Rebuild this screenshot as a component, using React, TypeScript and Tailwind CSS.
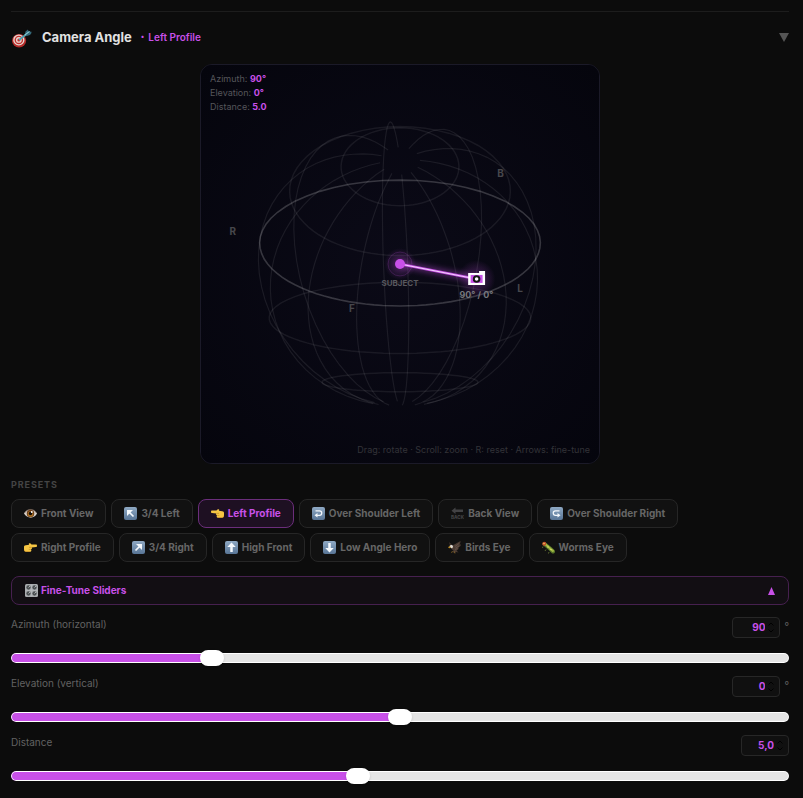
import { useState } from "react";
import type { ReactNode } from "react";

const CENTER = 200;
const RADIUS = 133;
const TILT = (25 * Math.PI) / 180;
const YAW = 25;
const DEPTH = 0.368;

const rad = (deg: number) => (deg * Math.PI) / 180;

function project(lon: number, lat: number, r = 1): [number, number] {
  const a = rad(lon + YAW);
  const b = rad(lat);
  const x = r * Math.cos(b) * Math.cos(a);
  const z = r * Math.cos(b) * Math.sin(a);
  const y = r * Math.sin(b);
  const sy = z * Math.sin(TILT) - y * Math.cos(TILT);
  const scale = RADIUS / (1 + DEPTH * (z * Math.cos(TILT) + y * Math.sin(TILT)));
  return [CENTER + x * scale, CENTER + sy * scale];
}

function line(points: [number, number][]) {
  return "M" + points.map(([x, y]) => `${x.toFixed(1)} ${y.toFixed(1)}`).join("L");
}

function ring(lat: number) {
  const pts: [number, number][] = [];
  for (let lon = 0; lon < 360; lon += 5) pts.push(project(lon, lat));
  return line(pts) + "Z";
}

function meridian(lon: number) {
  const pts: [number, number][] = [];
  for (let lat = -80; lat <= 80; lat += 5) pts.push(project(lon, lat));
  return line(pts);
}

const LATITUDES = [-60, -30, 30, 60];
const LONGITUDES = [0, 30, 60, 90, 120, 150, 180, 210, 240, 270, 300, 330];
const COMPASS = [
  { name: "L", lon: 0 },
  { name: "F", lon: 90 },
  { name: "R", lon: 180 },
  { name: "B", lon: 270 },
];

function Sphere() {
  const [cx, cy] = project(0, 0, 0.7);
  return (
    <svg viewBox="0 0 400 400" className="block w-full font-['Inter',sans-serif]" role="img" aria-label="Camera sphere">
      <defs>
        <radialGradient id="back" cx="50%" cy="50%" r="70%">
          <stop offset="0" stopColor="#0b0a17" />
          <stop offset="1" stopColor="#05050d" />
        </radialGradient>
        <radialGradient id="halo">
          <stop offset="0" stopColor="#c850e8" stopOpacity="0.35" />
          <stop offset="1" stopColor="#c850e8" stopOpacity="0" />
        </radialGradient>
        <filter id="glow" x="-30%" y="-100%" width="160%" height="300%">
          <feGaussianBlur stdDeviation="3" />
        </filter>
      </defs>
      <rect width="400" height="400" fill="url(#back)" />
      <g fill="none" stroke="#fff" strokeOpacity="0.08">
        {LATITUDES.map((lat) => (
          <path key={lat} d={ring(lat)} strokeWidth="1.5" strokeOpacity="0.07" />
        ))}
        {LONGITUDES.map((lon) => (
          <path key={lon} d={meridian(lon)} strokeWidth="1.2" />
        ))}
      </g>
      <path d={ring(0)} fill="none" stroke="#fff" strokeOpacity="0.19" strokeWidth="1.6" />
      <g fill="#47474c" fontSize="10" fontWeight="700" textAnchor="middle">
        {COMPASS.map(({ name, lon }) => {
          const [x, y] = project(lon, 0, 1.165);
          return (
            <text key={name} x={x} y={y + 4}>
              {name}
            </text>
          );
        })}
      </g>
      <circle cx="200" cy="200" r="16" fill="url(#halo)" />
      <circle cx="200" cy="200" r="12" fill="none" stroke="#c850e8" strokeOpacity="0.2" />
      <path d={`M200 200L${cx} ${cy}`} stroke="#c850e8" strokeWidth="4" strokeOpacity="0.6" filter="url(#glow)" />
      <circle cx={cx} cy={cy} r="19" fill="url(#halo)" />
      <path d={`M200 200L${cx} ${cy}`} stroke="#c850e8" strokeWidth="2.5" />
      <path d={`M200 200L${cx} ${cy}`} stroke="#f3d5fb" strokeWidth="1" />
      <circle cx="200" cy="200" r="5" fill="#c850e8" />
      <g transform={`translate(${Math.round(cx)} ${Math.round(cy)})`}>
        <path d="M-8.500-6h11v-2h6v14h-17z" fill="#fff" />
        <rect x="-6" y="-4" width="12" height="8" fill="#c850e8" />
        <circle r="3.800" fill="#151515" />
        <circle r="1.800" fill="#fff" />
      </g>
      <text x="200" y="222" fill="#58585e" fontSize="8" fontWeight="700" textAnchor="middle">
        SUBJECT
      </text>
      <text x={cx} y={cy + 19} fill="#77777c" fontSize="9" fontWeight="700" textAnchor="middle">
        90° / 0°
      </text>
    </svg>
  );
}

function Glyph({ children, size = "size-[13px]" }: { children: ReactNode; size?: string }) {
  return (
    <svg viewBox="0 0 26 26" className={`${size} shrink-0`} aria-hidden="true">
      {children}
    </svg>
  );
}

function Tile({ children }: { children: ReactNode }) {
  return (
    <Glyph>
      <defs>
        <linearGradient id="tile" x1="0" y1="0" x2="0" y2="1">
          <stop offset="0" stopColor="#8fa9c4" />
          <stop offset="1" stopColor="#587596" />
        </linearGradient>
      </defs>
      <rect width="26" height="26" rx="4" fill="url(#tile)" />
      <g fill="none" stroke="#f4f8fc" strokeWidth="3.500">
        {children}
      </g>
    </Glyph>
  );
}

function Hand({ flip = false }: { flip?: boolean }) {
  return (
    <Glyph>
      <g transform={flip ? "translate(26 0) scale(-1 1)" : undefined}>
        <path
          d="M0 9.500C0 8 .8 7 2 7h9l2-2c1-1.200 3.500-.7 3.500 1l-.8 1.700 6.800 1C25 9.300 26 10 26 12v5c0 2.800-1.500 4.500-4 4.500h-7c-2.500 0-3.700-1-3.700-3 0-.8.200-1.300.8-1.800-1.300-.4-2-1.300-2-2.300 0-.6.200-1.100.6-1.500L2 12c-1.200 0-2-1-2-2.500z"
          fill="#f5c644"
        />
        <path d="M11 12.700h5M12.500 16.800h4" stroke="#b97f1d" strokeWidth="1.200" fill="none" />
        <path d="M14 21h8c2 0 3.300-1.500 3.300-3.500" stroke="#d99a2b" strokeWidth="1.300" fill="none" />
      </g>
    </Glyph>
  );
}

const eye = (
  <Glyph>
    <path d="M0 13C5 3 20 2 26 13 21 24 6 24 0 13z" fill="#d9d2cb" />
    <path d="M1 12C6 3 20 2 25 12" fill="none" stroke="#6d5b50" strokeWidth="1.500" />
    <circle cx="13" cy="13" r="7.500" fill="#6b3f1c" />
    <circle cx="13" cy="14" r="5.500" fill="#a86f22" />
    <circle cx="13" cy="13" r="3.500" fill="#120b06" />
    <circle cx="15.500" cy="10" r="1.800" fill="#fff" />
  </Glyph>
);

const back = (
  <Glyph>
    <path d="M1 7.500L9 1v4h15v5H9v4z" fill="#424244" />
    <text x="13" y="24" fill="#424244" fontSize="9" fontWeight="800" textAnchor="middle">
      BACK
    </text>
  </Glyph>
);

const eagle = (
  <Glyph>
    <path d="M8 9C13 8 17 4 25 0c0 4-1 6-2 7l3 0c-1 4-3 5-5 6 1 2-1 5-4 6l4 4-5-1-3 2-4-2 2-3C6 17 5 13 8 9z" fill="#4b3b33" />
    <path d="M7 11C3 8 2 5 2 2l8 7z" fill="#372c27" />
    <path d="M3 10c2-3 7-2 7 1l-1 3c-2 1-4 0-5-2z" fill="#ded9d2" />
    <path d="M4 11l-3 1 1 2 3-1zM9 20l-2 4M13 21l1 4" fill="#d9a52d" stroke="#bd8c28" />
    <path d="M14 11l8-6M15 14l7-4M14 17l5-2" stroke="#75645a" />
  </Glyph>
);

const worm = (
  <Glyph>
    <path d="M5 6l6 5 6 5 5 5" fill="none" stroke="#58762a" strokeWidth="8" strokeLinecap="round" />
    <path d="M6 6l6 5 5 5 5 4" fill="none" stroke="#a3ba43" strokeWidth="4.500" strokeLinecap="round" strokeDasharray="3 3" />
    <circle cx="4.500" cy="5.500" r="4" fill="#c5502b" />
    <circle cx="4" cy="5" r="1.500" fill="#f3d267" />
    <path d="M2 11l-1 3M8 17l-2 3M14 22l-1 3" stroke="#728339" strokeWidth="1.500" />
    <circle cx="12" cy="12" r="1.500" fill="#e2de72" />
    <circle cx="18" cy="17" r="1.500" fill="#e2de72" />
  </Glyph>
);

const knobs = (
  <Glyph>
    <rect width="26" height="26" rx="3" fill="#a9acaf" />
    {[
      [7, 7],
      [19, 7],
      [7, 19],
      [19, 19],
    ].map(([x, y]) => (
      <g key={`${x}-${y}`}>
        <circle cx={x} cy={y} r="4.300" fill="#4c5053" />
        <path d={`M${x} ${y}l3-3`} stroke="#d9dbdc" strokeWidth="1.400" />
      </g>
    ))}
    <path d="M1 13h24M13 1v24" stroke="#b9bcbe" strokeWidth="1.200" />
  </Glyph>
);

const dart = (
  <Glyph size="size-[21px]">
    <ellipse cx="10" cy="17" rx="8.800" ry="8.300" fill="#b32b29" />
    <ellipse cx="9.700" cy="16" rx="7" ry="6.800" fill="#e6d8d2" />
    <circle cx="9.700" cy="16" r="5.300" fill="#c6302d" />
    <circle cx="9.700" cy="16" r="3.600" fill="#e6d8d2" />
    <circle cx="9.700" cy="16" r="1.900" fill="#c6302d" />
    <path d="M10 16l9-7" stroke="#4f9fae" strokeWidth="2.400" />
    <path d="M17 9.500l1-4 3-2.500.8 2.500 3.700.5-.5 2-1.500 2-4 1z" fill="#35697a" />
    <path d="M17 10l6-4.500" stroke="#8ed4dc" strokeWidth="1.300" />
  </Glyph>
);

const PRESETS: { label: string; icon: ReactNode }[] = [
  { label: "Front View", icon: eye },
  { label: "3/4 Left", icon: <Tile><path d="M19 19L10 10" /><path d="M6 6h12L6 18z" fill="#f4f8fc" stroke="none" /></Tile> },
  { label: "Left Profile", icon: <Hand /> },
  { label: "Over Shoulder Left", icon: <Tile><path d="M7 7.500h8a4.500 4.500 0 010 9h-5" strokeWidth="2.500" /><path d="M11 12v9l-6-4.500z" fill="#f4f8fc" stroke="none" /></Tile> },
  { label: "Back View", icon: back },
  { label: "Over Shoulder Right", icon: <Tile><path d="M19 7.500h-8a4.500 4.500 0 000 9h5" strokeWidth="2.500" /><path d="M15 12v9l6-4.500z" fill="#f4f8fc" stroke="none" /></Tile> },
  { label: "Right Profile", icon: <Hand flip /> },
  { label: "3/4 Right", icon: <Tile><path d="M7 19L16 10" /><path d="M20 6H8l12 12z" fill="#f4f8fc" stroke="none" /></Tile> },
  { label: "High Front", icon: <Tile><path d="M13 22V10" strokeWidth="5" /><path d="M13 3l8.500 9h-17z" fill="#f4f8fc" stroke="none" /></Tile> },
  { label: "Low Angle Hero", icon: <Tile><path d="M13 4v12" strokeWidth="5" /><path d="M13 23l8.500-9h-17z" fill="#f4f8fc" stroke="none" /></Tile> },
  { label: "Birds Eye", icon: eagle },
  { label: "Worms Eye", icon: worm },
];

interface ControlProps {
  id: string;
  label: string;
  min: number;
  max: number;
  step: number;
  start: number;
  text: (v: number) => string;
  unit?: string;
}

function Control({ id, label, min, max, step, start, text, unit }: ControlProps) {
  const [value, setValue] = useState(start);
  const part = (value - min) / (max - min);
  return (
    <div className="flex flex-col gap-[11px]">
      <div className="flex items-start justify-between">
        <label htmlFor={id} className="text-[10px] leading-[15px] text-[#626262]">
          {label}
        </label>
        <div className="flex gap-1">
          <div className="grid w-12 items-center">
            <input
              type="text"
              inputMode="decimal"
              readOnly
              aria-label={`${label} value`}
              value={text(value)}
              className="col-start-1 row-start-1 h-[21px] w-full rounded-sm border border-[#272727] bg-[#101010] pr-[14px] pb-px text-right text-[10px] font-bold text-[#c850e8] outline-none"
            />
            <svg viewBox="0 0 6 11" className="col-start-1 row-start-1 mr-[6px] h-[11px] w-[6px] justify-self-end" fill="none" stroke="#000" aria-hidden="true">
              <path d="M.5 3.500L3 1l2.500 2.500M.5 7.500L3 10l2.500-2.500" />
            </svg>
          </div>
          {unit && <span className="text-[10px] leading-[19px] text-[#626262]">{unit}</span>}
        </div>
      </div>
      <input
        id={id}
        type="range"
        min={min}
        max={max}
        step={step}
        value={value}
        onChange={(e) => setValue(Number(e.target.value))}
        style={{
          backgroundImage: `linear-gradient(to right, #c850e8 calc(12px + (100% - 24px) * ${part}), #e5e5e5 0)`,
        }}
        className="my-1 block h-[10px] w-full appearance-none rounded-full bg-[#e5e5e5] ring-1 ring-white ring-inset [&::-webkit-slider-thumb]:h-4 [&::-webkit-slider-thumb]:w-6 [&::-webkit-slider-thumb]:appearance-none [&::-webkit-slider-thumb]:rounded-full [&::-webkit-slider-thumb]:bg-white [&::-webkit-slider-thumb]:shadow"
      />
    </div>
  );
}

export default function App() {
  const [active, setActive] = useState("Left Profile");
  return (
    <main className="min-h-screen bg-[#0c0c0c] pt-[11px] pr-[14px] pb-[14px] pl-[11px] font-['Inter',sans-serif]">
      <section className="border-t border-[#1d1d1d]">
        <header className="flex h-[52px] items-center pb-[2px]">
          {dart}
          <h2 className="ml-[10px] text-[13px] leading-5 font-bold text-[#e2e2e2]">Camera Angle</h2>
          <span className="ml-[9px] flex items-center gap-1 text-[10px] leading-5 font-semibold text-[#c850e8]">
            <span className="text-[7px]">•</span>
            Left Profile
          </span>
          <button type="button" aria-label="Collapse" className="ml-auto text-[#555]">
            <svg viewBox="0 0 10 9" className="h-[9px] w-[10px]" fill="currentColor" aria-hidden="true">
              <path d="M0 0h10L5 9z" />
            </svg>
          </button>
        </header>

        <div className="mx-auto grid w-full max-w-[400px] overflow-hidden rounded-xl border border-[#1b1a28] bg-[#07070f]">
          <div className="col-start-1 row-start-1">
            <Sphere />
          </div>
          <div className="z-10 col-start-1 row-start-1 self-start px-[9px] py-[7px] text-[9px] leading-[14px] text-[#55555a]">
            <p>Azimuth: <b className="font-bold text-[#c850e8]">90°</b></p>
            <p>Elevation: <b className="font-bold text-[#c850e8]">0°</b></p>
            <p>Distance: <b className="font-bold text-[#c850e8]">5.0</b></p>
          </div>
          <p className="z-10 col-start-1 row-start-1 self-end justify-self-end px-[9px] py-[6px] text-[9px] leading-[14px] text-[#333338]">
            Drag: rotate · Scroll: zoom · R: reset · Arrows: fine-tune
          </p>
        </div>

        <h3 className="mt-[14px] text-[9px] leading-[14px] font-bold tracking-widest text-[#444]">PRESETS</h3>
        <div className="mt-[7px] flex flex-wrap gap-[5px] pr-2">
          {PRESETS.map(({ label, icon }) => (
            <button
              key={label}
              type="button"
              onClick={() => setActive(label)}
              className={`flex h-[29px] items-center gap-1 rounded-lg border px-3 text-[10px] font-bold ${
                active === label ? "border-[#6b2e7b] bg-[#1e1022] text-[#c850e8]" : "border-[#262626] bg-[#111] text-[#666]"
              }`}
            >
              {icon}
              {label}
            </button>
          ))}
        </div>

        <button
          type="button"
          className="mt-[14px] flex h-[29px] w-full items-center gap-[3px] rounded-lg border border-[#46204f] bg-[#120e13] px-[13px] text-[10px] font-bold text-[#c850e8]"
        >
          {knobs}
          Fine-Tune Sliders
          <svg viewBox="0 0 7 8" className="ml-auto h-2 w-[7px]" fill="currentColor" aria-hidden="true">
            <path d="M3.500 0L7 8H0z" />
          </svg>
        </button>

        <div className="mt-3 flex flex-col gap-[9px]">
          <Control id="azimuth" label="Azimuth (horizontal)" min={0} max={360} step={1} start={90} text={(v) => String(v)} unit="°" />
          <Control id="elevation" label="Elevation (vertical)" min={-90} max={90} step={1} start={0} text={(v) => String(v)} unit="°" />
          <Control id="distance" label="Distance" min={1} max={10} step={0.1} start={5} text={(v) => v.toFixed(1).replace(".", ",")} />
        </div>
      </section>
    </main>
  );
}
